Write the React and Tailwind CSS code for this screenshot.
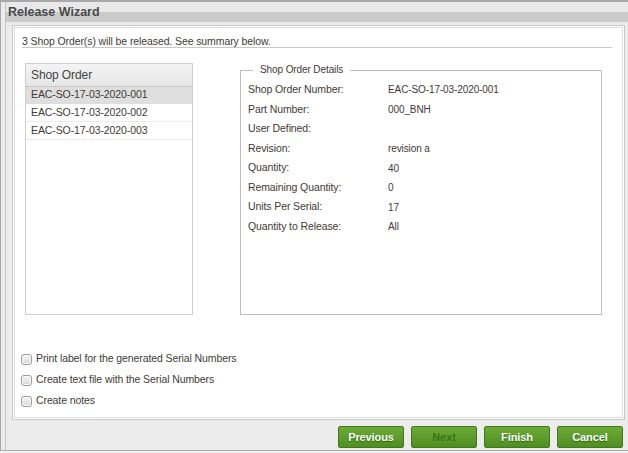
import React from 'react';

const details = [
    ["Shop Order Number:", "EAC-SO-17-03-2020-001"],
    ["Part Number:", "000_BNH"],
    ["User Defined:", ""],
    ["Revision:", "revision a"],
    ["Quantity:", "40"],
    ["Remaining Quantity:", "0"],
    ["Units Per Serial:", "17"],
    ["Quantity to Release:", "All"],
];

const orders = ["EAC-SO-17-03-2020-001", "EAC-SO-17-03-2020-002", "EAC-SO-17-03-2020-003"];

const options = [
    "Print label for the generated Serial Numbers",
    "Create text file with the Serial Numbers",
    "Create notes",
];

const Checkbox = () => (
    <span className="w-[11px] h-[11px] rounded-[3px] border border-[#9a9a9a] bg-gradient-to-b from-[#f4f4f4] to-[#d8d8d8] shadow-[inset_0_0_0_1px_#fff]"></span>
);

const WizardButton = ({ label, disabled }) => (
    <button
        className={
            "w-[66px] h-[22px] rounded-[2px] border border-[#3f7a17] bg-gradient-to-b from-[#6cab35] to-[#4f8f22] text-[11px] font-bold " +
            (disabled ? "text-[#3d7419]" : "text-white [text-shadow:0_1px_1px_#2b5a0c]")
        }
    >
        {label}
    </button>
);

export default function App() {
    return (
        <div className="w-[628px] h-[453px] bg-[#f2f2f2] overflow-hidden font-['Liberation_Sans',Arial,sans-serif] text-[10.5px] tracking-[-0.1px] text-[#3f3a36]">
            <div className="h-[451px] border-t-2 border-l border-b border-[#a9a9a9] bg-[#ececec] flex flex-col pl-[4px]">
                {/* Title bar */}
                <div className="h-[20px] border-l border-[#c4c4c4] bg-[linear-gradient(#e8e8e8_0,#e8e8e8_50%,#cbcbcb_50%,#cbcbcb_100%)] flex items-center pl-[2px]">
                    <span className="font-bold text-[12.5px] text-[#4a4a4a] tracking-[0px]">Release Wizard</span>
                </div>

                <div className="flex-1 flex flex-col border-l border-[#c4c4c4] bg-[#ececec]">
                    {/* Content panel */}
                    <div className="ml-[6px] mr-[3px] mt-[3px] h-[395px] border border-[#c8c8c8] bg-white p-px">
                        <div className="h-full border border-[#dcdcdc] bg-white px-[7px] pt-[8px] flex flex-col">
                            <div className="h-[12px] leading-[11px] border-b border-[#c8c8c8] mr-[3px]">
                                3 Shop Order(s) will be released. See summary below.
                            </div>

                            <div className="flex gap-[47px] mt-[15px] ml-[3px]">
                                {/* Shop order list */}
                                <div className="w-[168px] h-[252px] border border-[#cfcfcf] bg-white">
                                    <div className="h-[22px] bg-gradient-to-b from-[#f4f4f4] to-[#e6e6e6] flex items-center pl-[5px] text-[12px] text-[#444]">
                                        Shop Order
                                    </div>
                                    {orders.map((o, i) => (
                                        <div
                                            key={o}
                                            className={
                                                "h-[18px] flex items-center pl-[5px] border-b " +
                                                (i === 0
                                                    ? "bg-[#dedede] border-t border-t-[#b8b8b8] border-dotted border-b-[#dedede]"
                                                    : "border-[#ececec]")
                                            }
                                        >
                                            {o}
                                        </div>
                                    ))}
                                </div>

                                {/* Details */}
                                <fieldset className="w-[362px] h-[252px] border border-[#bdbdbd] px-[7px] pt-[3px]">
                                    <legend className="ml-[5px] px-[7px] text-[10px] leading-[14px]">Shop Order Details</legend>
                                    <div className="flex flex-col">
                                        {details.map(([k, v]) => (
                                            <div key={k} className="h-[19.6px] flex items-center">
                                                <span className="w-[140px]">{k}</span>
                                                <span className="text-[10px]">{v}</span>
                                            </div>
                                        ))}
                                    </div>
                                </fieldset>
                            </div>

                            {/* Options */}
                            <div className="flex flex-col mt-[38px] gap-[9px] -ml-[1px]">
                                {options.map((o) => (
                                    <label key={o} className="flex items-center gap-[4px] h-[12px]">
                                        <Checkbox />
                                        <span>{o}</span>
                                    </label>
                                ))}
                            </div>
                        </div>
                    </div>

                    {/* Footer */}
                    <div className="flex justify-end gap-[7px] pr-[5px] mt-[6px]">
                        <WizardButton label="Previous" />
                        <WizardButton label="Next" disabled />
                        <WizardButton label="Finish" />
                        <WizardButton label="Cancel" />
                    </div>
                </div>
            </div>
        </div>
    );
}
